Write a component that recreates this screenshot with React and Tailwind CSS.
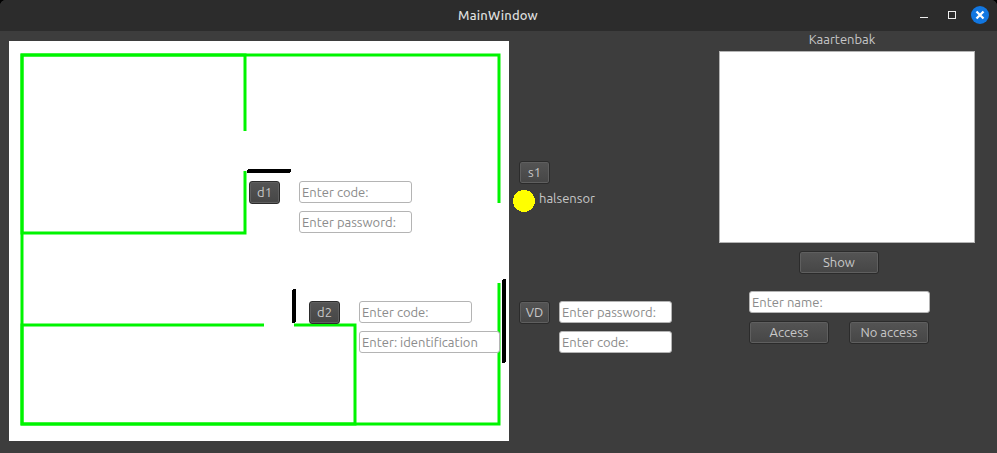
import React from "react";

function Button({ children, className = "" }) {
  return (
    <button
      className={`flex h-[23px] items-center justify-center rounded-[3px] border border-[#2b2b2b] bg-linear-to-b from-[#545454] to-[#464646] text-[#c8c8c8] shadow-[inset_0_0_0_1px_#5f5f5f] ${className}`}
    >
      {children}
    </button>
  );
}

function Field({ placeholder, className = "" }) {
  return (
    <input
      placeholder={placeholder}
      className={`block h-[22px] rounded-[3px] border border-[#b4b4b4] bg-white px-[2px] pb-px text-[#333] outline-none placeholder:text-[#8b8b8b] placeholder:opacity-100 ${className}`}
    />
  );
}

function TitleBar() {
  return (
    <header className="grid h-[31px] grid-cols-[1fr_auto_1fr] items-center bg-[#2c2c2c]">
      <span />
      <h1 className="pr-px text-[13px] font-medium tracking-[0.2px] text-[#dedede]">MainWindow</h1>
      <div className="flex justify-end">
        <svg width="88" height="31" viewBox="0 0 88 31">
          <path d="M11 17.5h8" stroke="#eee" />
          <rect x="39.5" y="11.5" width="7" height="7" fill="none" stroke="#eee" />
          <circle cx="71" cy="15" r="9" fill="#1277e1" />
          <path d="M67.5 11.5l7 7M74.5 11.5l-7 7" stroke="#fff" strokeWidth="2.3" />
        </svg>
      </div>
    </header>
  );
}

function FloorPlan() {
  return (
    <section className="relative h-[400px] w-[500px] shrink-0 bg-white">
      <svg width="500" height="400" viewBox="0 0 500 400" fill="none" className="block">
        <g stroke="#00f400" strokeWidth="3">
          <path d="M490 162V14H13V383H490V242" />
          <path d="M236 130V192H13V14H236V90" />
          <path d="M285 284H346V383H13V284H255" />
        </g>
        <g stroke="#000" strokeWidth="4" strokeLinecap="round" shapeRendering="crispEdges">
          <path d="M240 130H280M285 250V280M495 240V320" />
        </g>
      </svg>
      <Button className="absolute left-[240px] top-[140px] w-[31px]">d1</Button>
      <div className="absolute left-[290px] top-[140px] flex flex-col gap-2">
        <Field placeholder="Enter code:" className="w-[113px]" />
        <Field placeholder="Enter password:" className="w-[113px]" />
      </div>
      <Button className="absolute left-[300px] top-[260px] w-[31px]">d2</Button>
      <div className="absolute left-[350px] top-[260px] flex flex-col gap-2">
        <Field placeholder="Enter code:" className="w-[113px]" />
        <Field placeholder="Enter: identification" className="w-[141px]" />
      </div>
    </section>
  );
}

function DoorControls() {
  return (
    <section className="w-[163px] shrink-0 pl-1 pt-[120px]">
      <Button className="ml-[6px] w-[31px]">s1</Button>
      <div className="mt-[6px] flex h-[22px] gap-1">
        <svg width="22" height="22" viewBox="0 0 22 22" shapeRendering="crispEdges">
          <circle cx="11" cy="11" r="11" fill="#ffff00" />
        </svg>
        <span className="leading-[16px] text-[#c8c8c8]">halsensor</span>
      </div>
      <div className="ml-[6px] mt-[89px] flex gap-[9px]">
        <Button className="w-[31px]">VD</Button>
        <div className="flex flex-col gap-2">
          <Field placeholder="Enter password:" className="w-[113px]" />
          <Field placeholder="Enter code:" className="w-[113px]" />
        </div>
      </div>
    </section>
  );
}

function CardReader() {
  return (
    <section className="ml-[47px] w-[256px] shrink-0">
      <h2 className="-mt-[10px] mb-[10px] h-[10px] pr-[10px] text-center leading-[17px] text-[#c8c8c8]">Kaartenbak</h2>
      <div className="h-[192px] border border-[#b4b4b4] bg-white" />
      <Button className="ml-[80px] mt-2 w-[80px]">Show</Button>
      <Field placeholder="Enter name:" className="ml-[30px] mt-[17px] w-[181px]" />
      <div className="ml-[30px] mt-2 flex gap-5">
        <Button className="w-[80px]">Access</Button>
        <Button className="w-[80px]">No access</Button>
      </div>
    </section>
  );
}

export default function App() {
  return (
    <div className="h-[453px] w-[997px] overflow-hidden bg-black font-['Ubuntu','Noto_Sans',sans-serif] text-[13px]">
      <div className="h-full overflow-hidden rounded-t-[6px] bg-[#3d3d3d]">
        <TitleBar />
        <main className="flex pl-[9px] pt-[10px]">
          <FloorPlan />
          <DoorControls />
          <CardReader />
        </main>
      </div>
    </div>
  );
}
